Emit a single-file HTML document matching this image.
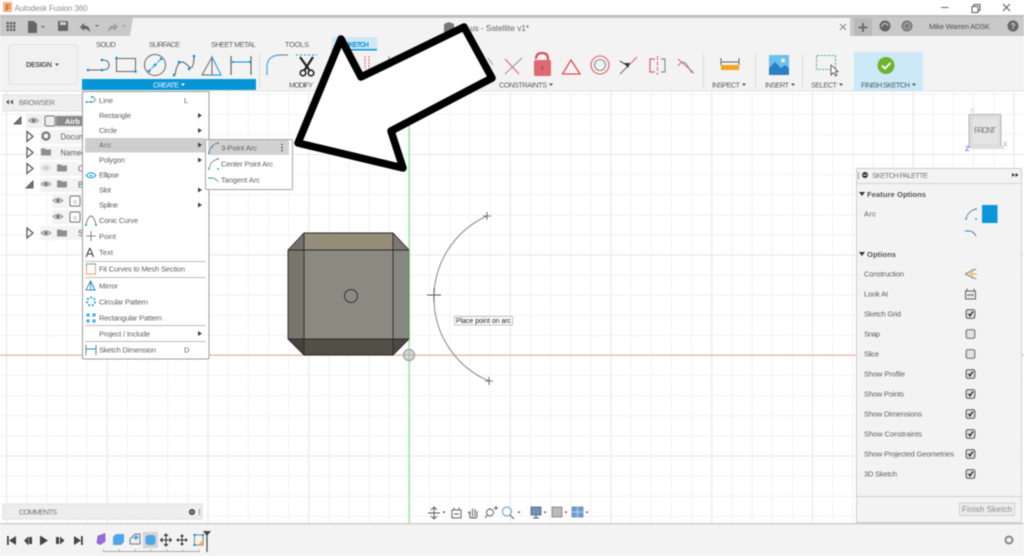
<!DOCTYPE html>
<html><head><meta charset="utf-8"><title>Autodesk Fusion 360</title>
<style>
html,body{margin:0;padding:0;background:#fff;width:1024px;height:556px;overflow:hidden}
svg{display:block;position:absolute;left:0;top:0;filter:blur(.4px)}
text{font-family:"Liberation Sans",sans-serif;font-size:7.4px;fill:#5c5c5c}
.t{font-size:7.4px;fill:#5f5f5f}
.m{font-size:7.5px;fill:#5f5f5f}
.b{font-weight:bold;fill:#555;font-size:7.6px}
.r{font-size:7.8px;fill:#5a5a5a}
</style></head><body>
<svg width="1024" height="556" viewBox="0 0 1024 556" xmlns="http://www.w3.org/2000/svg">
<defs>
<pattern id="g" x="409" y="355" width="20.15" height="20.1" patternUnits="userSpaceOnUse"><path d="M.5 0V20.1M0 .5H20.15" stroke="#f2f2f2" fill="none"/></pattern>
<pattern id="G" x="409" y="355" width="100.75" height="100.5" patternUnits="userSpaceOnUse"><path d="M.5 0V100.5M0 .5H100.75" stroke="#e7e7e7" fill="none"/></pattern>
<g id="eye"><path d="M-5 0Q0-4.5 5 0Q0 4.5-5 0Z" fill="#c9c9c9" stroke="#8a8a8a" stroke-width=".8"/><circle r="1.6" fill="#777"/></g>
<g id="fold"><path d="M-5-3.500H-1L0-2.500H5V3.500H-5Z" fill="#8f8f8f"/></g>
<path id="tri" d="M-3-5L3 0L-3 5Z" fill="#fff" stroke="#555" stroke-width="1.200"/>
<g id="chk"><rect x="-4.300" y="-4.300" width="8.600" height="8.600" rx="1.500" fill="#dedede" stroke="#666" stroke-width="1.200"/><path d="M-2-.3L-.6 1.800L2.400-2.500" fill="none" stroke="#222" stroke-width="1.300"/></g>
<rect id="unc" x="-4.300" y="-4.300" width="8.600" height="8.600" rx="1.500" fill="#e2e2e2" stroke="#777" stroke-width="1.200"/>
<path id="cr" d="M-4 0H4M0-4V4" stroke="#555" stroke-width=".8" fill="none"/>
</defs>

<!-- canvas -->
<rect width="1024" height="556" fill="#fff"/>
<rect y="91" width="1024" height="432" fill="url(#g)"/>
<rect y="91" width="1024" height="432" fill="url(#G)"/>
<rect x="0" y="354.600" width="1024" height="1" fill="#eda899"/>
<rect x="408.200" y="91" width="1.800" height="432" fill="#a6e8a6"/>

<!-- title bar -->
<rect x="3" y="2" width="9" height="10" fill="#f4b183"/>
<text x="5.500" y="10.500" style="font-size:8px;font-weight:bold;fill:#c55a11">F</text>
<text x="14.500" y="11" style="font-size:8px;fill:#8c8c8c" textLength="73">Autodesk Fusion 360</text>
<path d="M941 7.500H948.500" stroke="#666"/>
<path d="M972 6.500h6v6h-6zM974 6.500v-2h6v6h-2" fill="none" stroke="#555"/>
<path d="M1003 4L1010 11M1010 4L1003 11" stroke="#555"/>

<!-- tab row -->
<rect y="15" width="1024" height="21" fill="#c9c9c9"/>
<rect y="15" width="1024" height="2" fill="#bdbdbd"/>
<path d="M133 18H850V36H130Z" fill="#f3f3f3"/>
<rect x="850" y="18" width="174" height="18" fill="#c9c9c9"/>
<rect x="854" y="18" width="18" height="18" fill="#b9b9b9"/>
<path d="M863 23V32M858.500 27.500H867.500" stroke="#666" stroke-width="1.800"/>
<path d="M840 24L846 30M846 24L840 30" stroke="#888" stroke-width="1"/>
<circle cx="885" cy="26" r="5.500" fill="#666"/><path d="M882 27a3 3 0 0 1 6-1" stroke="#ccc" fill="none"/>
<circle cx="907" cy="26" r="5.500" fill="#7b7b7b"/><circle cx="907" cy="26" r="3" fill="none" stroke="#bbb" stroke-width=".8"/>
<text x="929" y="29" style="font-size:7.600px;fill:#555" textLength="61">Mike Warren ADSK</text>
<circle cx="1013" cy="26" r="5.500" fill="#666"/><text x="1010.600" y="29" style="font-size:8px;font-weight:bold;fill:#ddd">?</text>
<!-- quick access -->
<g fill="#666">
<path d="M6.500 22h2.400v2.400h-2.400zM9.800 22h2.400v2.400H9.800zM13 22h2.400v2.400H13zM6.500 25.300h2.400v2.400h-2.400zM9.800 25.300h2.400v2.400H9.800zM13 25.300h2.400v2.400H13zM6.500 28.600h2.400V31h-2.400zM9.800 28.600h2.400V31H9.800zM13 28.600h2.400V31H13z"/>
<path d="M28 21h6l3 3v9h-9z"/><path d="M41 26l2 2 2-2z"/>
<path d="M58 21h10v10H58z"/>
<path d="M80 27l4-4v2.500q6 0 6 7q-2-4-6-3.500v2z"/><path d="M95 25l2 2 2-2z"/></g>
<g fill="#a0a0a0"><path d="M118 27l-4-4v2.500q-6 0-6 7q2-4 6-3.500v2z"/><path d="M122 25l2 2 2-2z"/></g>
<rect x="60" y="22" width="6" height="3" fill="#ccc"/>

<!-- toolbar -->
<rect y="36" width="1024" height="55" fill="#f3f3f3"/>
<rect y="90.500" width="1024" height="1" fill="#e2e2e2"/>
<rect x="8.500" y="44.500" width="69" height="40" rx="3" fill="#f1f1f1" stroke="#e2e2e2"/>
<text x="26" y="67" style="font-size:7.200px;font-weight:bold;fill:#555" textLength="26">DESIGN</text><path d="M55 63.500h4l-2 2.500z" fill="#555"/>
<rect x="332" y="37" width="45" height="12" fill="#cfe8f6"/><rect x="332" y="49" width="45" height="1.500" fill="#0696d7"/>
<text class="t" x="96" y="47" textLength="20">SOLID</text>
<text class="t" x="149" y="47" textLength="31">SURFACE</text>
<text class="t" x="211" y="47" textLength="45">SHEET METAL</text>
<text class="t" x="285" y="47" textLength="24">TOOLS</text>
<text x="345" y="47" style="font-size:7.200px;font-weight:bold;fill:#0696d7" textLength="24">SKETCH</text>
<rect x="82" y="79" width="174" height="11" fill="#0696d7"/>
<text x="153" y="87.500" style="font-size:7.500px;fill:#e8f4fb" textLength="26">CREATE</text><path d="M181 83.500h4l-2 2.500z" fill="#fff"/>
<!-- create icons -->
<g fill="none" stroke="#666" stroke-width="1">
<path d="M88 70H102Q109 70 109 65Q109 60 102 60"/>
<rect x="116.500" y="58.500" width="19" height="13"/>
<circle cx="155" cy="65" r="10.500"/>
<path d="M175 75Q177 61 183 62Q187 64 190 68Q194 68 194 56" stroke-width="1.100"/>
<path d="M202 75L212 57L212 75Z"/>
<path d="M231 56V75M251 56V75" stroke-width="1.200"/>
<path d="M267 75V67Q267 56 279 55H288" stroke="#8a8a8a" stroke-width="1.200"/>
</g>
<path d="M212 57L221 75H212" fill="none" stroke="#3aa0dc" stroke-width="1.200"/>
<path d="M267 75V67Q267 56 279 55" fill="none" stroke="#64b5e8" stroke-width="1.300"/>
<path d="M233 62H250" stroke="#0696d7" stroke-width="1"/>
<path d="M149 71L161 59" stroke="#0696d7" stroke-width="1" stroke-dasharray="3 1"/>
<g fill="#0696d7">
<circle cx="88" cy="70" r="1.300"/><circle cx="102" cy="70" r="1.300"/><circle cx="102" cy="60" r="1.300"/>
<circle cx="116.500" cy="58" r="1.300"/><circle cx="135.500" cy="71.500" r="1.300"/>
<circle cx="149" cy="71" r="1.300"/><circle cx="155" cy="65" r="1.300"/><circle cx="161" cy="59" r="1.300"/>
<circle cx="174" cy="75" r="1.300"/><circle cx="179" cy="62" r="1.300"/><circle cx="189" cy="69" r="1.300"/><circle cx="194" cy="56" r="1.300"/>
<circle cx="233" cy="62" r="1.100"/><circle cx="250" cy="62" r="1.100"/>
</g>
<!-- scissors -->
<path d="M300 57L310 71M313 57L304 71" stroke="#222" stroke-width="2.200"/>
<circle cx="303" cy="73" r="2.800" fill="none" stroke="#222" stroke-width="1.600"/><circle cx="311" cy="73" r="2.800" fill="none" stroke="#222" stroke-width="1.600"/>
<path d="M296 55H317" stroke="#0696d7" stroke-dasharray="2 2"/>
<text class="t" x="289" y="87.500" textLength="24">MODIFY</text>
<path d="M259.500 54V88" stroke="#ddd"/>
<path d="M365 56V69M369 56V69" stroke="#e0606a" stroke-width="1" stroke-dasharray="2 1"/>
<path d="M389 56V69" stroke="#e0606a"/>

<!-- constraints -->
<path d="M505 59L519 74" stroke="#e06a72" stroke-width="1.200"/><path d="M505 74L522 58" stroke="#9a9a9a"/>
<path d="M488 58L493 65" stroke="#9a9a9a"/>
<path d="M536 59q0-6 6-6t6 6v3" fill="none" stroke="#d9505a" stroke-width="2.200"/>
<rect x="534" y="60" width="17" height="16" rx="1.500" fill="#dd6a72"/><rect x="541.800" y="66" width="1" height="4" fill="#a83c44"/>
<path d="M571 60L580 74H562.500Z" fill="none" stroke="#e0505a" stroke-width="1.300"/>
<circle cx="600" cy="65" r="9" fill="none" stroke="#e0606a" stroke-width="1.100"/><circle cx="600" cy="65" r="5.500" fill="none" stroke="#8d8d8d" stroke-width="1.100"/>
<path d="M620 74L637 57" stroke="#e0606a" stroke-width="1"/><path d="M620 74L627 67" stroke="#808080"/><path d="M620 61L628 66" stroke="#333"/><path d="M628 68L624 63L630 63Z" fill="#333"/>
<path d="M655 59H650V72H655" fill="none" stroke="#e0606a" stroke-width="1.200"/><path d="M661 59H665V72H661" fill="none" stroke="#8d8d8d" stroke-width="1.200"/><path d="M657.500 56V75" stroke="#e0606a" stroke-dasharray="4 1.500"/>
<path d="M678 59L694 73" stroke="#e0606a"/><path d="M678 66Q683 59 687 65L692 73" fill="none" stroke="#888"/>
<text class="t" x="499" y="87.500" textLength="48">CONSTRAINTS</text><path d="M549 83.500h4l-2 2.500z" fill="#555"/>
<path d="M703.500 54V88M755.500 54V88M802.500 54V88" stroke="#dcdcdc"/>

<!-- inspect -->
<rect x="721" y="65" width="18" height="5" fill="#f0a51e"/><path d="M721 62H739M721 58V65M739 58V65" stroke="#666"/>
<text class="t" x="712" y="87.500" textLength="28">INSPECT</text><path d="M742 83.500h4l-2 2.500z" fill="#555"/>
<!-- insert -->
<rect x="769" y="55" width="20" height="20" fill="#6cc0f0"/><path d="M769 75V68L775 62L781 68L785 65L789 68V75Z" fill="#2c7fc0"/><circle cx="783" cy="60.500" r="2" fill="#f4efc8"/>
<text class="t" x="765" y="87.500" textLength="24">INSERT</text><path d="M791 83.500h4l-2 2.500z" fill="#555"/>
<!-- select -->
<rect x="816.500" y="55.500" width="19" height="14" fill="none" stroke="#5fbf7f" stroke-width="1.100" stroke-dasharray="2.500 1.200"/>
<path d="M831 65L831 75L833.500 72.500L835.500 76L837 75L835.500 71.500L838 71.500Z" fill="#fff" stroke="#444" stroke-width=".8"/>
<text class="t" x="811" y="87.500" textLength="26">SELECT</text><path d="M839 83.500h4l-2 2.500z" fill="#555"/>
<!-- finish -->
<rect x="854" y="52" width="69" height="39" fill="#cde8f6"/>
<circle cx="886" cy="65.500" r="8.500" fill="#6cb52d"/><path d="M882 65.500L885 68.500L890.500 63" fill="none" stroke="#fff" stroke-width="1.900"/>
<text class="t" x="861" y="87.500" textLength="49" style="fill:#4f5f68">FINISH SKETCH</text><path d="M912 83.500h4l-2 2.500z" fill="#555"/>

<!-- title -->
<path d="M444 24l5-2 5 2v8l-5 2-5-2z" fill="#777"/>
<text x="470" y="31" style="font-size:8.200px;fill:#666" textLength="59">us - Satellite v1*</text>

<!-- browser -->
<rect x="3" y="95" width="79" height="16" fill="#efefef" stroke="#e4e4e4"/>
<path d="M6 102l3-2.500v5zM10 102l3-2.500v5z" fill="#555"/>
<text x="19" y="105" style="font-size:7.400px;fill:#777" textLength="36">BROWSER</text>
<rect x="27" y="114" width="55" height="14" fill="#f0f0f0"/>
<path d="M14 124L21 117V124Z" fill="#777" stroke="#444" stroke-width=".8"/>
<use href="#eye" x="33.500" y="120.500"/>
<rect x="45" y="116" width="10" height="10" rx="1.500" fill="#eee" stroke="#777"/>
<rect x="56" y="116" width="26" height="10" fill="#8a8a8a"/><text x="65" y="124" style="font-size:7.500px;font-weight:bold;fill:#fff">Airb</text>
<rect x="40" y="130" width="42" height="14" fill="#f3f3f3"/><rect x="40" y="146" width="42" height="14" fill="#f3f3f3"/><rect x="40" y="162" width="42" height="14" fill="#f3f3f3"/><rect x="40" y="178" width="42" height="14" fill="#f3f3f3"/><rect x="52" y="194" width="30" height="14" fill="#f3f3f3"/><rect x="52" y="210" width="30" height="14" fill="#f3f3f3"/><rect x="40" y="226" width="42" height="14" fill="#f3f3f3"/>
<use href="#tri" x="30" y="136.500"/>
<circle cx="46" cy="136" r="3.500" fill="none" stroke="#777" stroke-width="2.200"/>
<text class="r" x="60.500" y="139.500">Docum</text>
<use href="#tri" x="30" y="152.500"/>
<use href="#fold" x="46" y="152"/>
<text class="r" x="60.500" y="155.500">Named</text>
<use href="#tri" x="30" y="168.500"/>
<use href="#eye" x="46" y="168" opacity=".35"/><use href="#fold" x="62" y="168"/>
<text class="r" x="78" y="171.500">O</text>
<path d="M26 188L33 181V188Z" fill="#777" stroke="#444" stroke-width=".8"/>
<use href="#eye" x="46" y="184"/><use href="#fold" x="62" y="184"/>
<text class="r" x="78" y="187.500">B</text>
<use href="#eye" x="58" y="200.500"/><rect x="70" y="196" width="10" height="10" rx="1.500" fill="#fff" stroke="#777"/><rect x="73" y="200" width="4" height="4" fill="#ddd"/>
<use href="#eye" x="58" y="216.500"/><rect x="70" y="212" width="10" height="10" rx="1.500" fill="#fff" stroke="#777"/><rect x="73" y="216" width="4" height="4" fill="#ddd"/>
<use href="#tri" x="30" y="233"/>
<use href="#eye" x="46" y="233"/><use href="#fold" x="62" y="233"/>
<text class="r" x="78" y="236">S</text>

<!-- comments -->
<rect x="3" y="504" width="199" height="15" fill="#ededed" stroke="#e0e0e0"/>
<text x="19" y="514.500" style="font-size:7.400px;fill:#777" textLength="38">COMMENTS</text>
<circle cx="192" cy="512" r="3" fill="#444"/><circle cx="192" cy="512" r="1" fill="#ddd"/>
<path d="M199.500 509V515" stroke="#999"/>

<!-- model -->
<path d="M304 233H393V250H304Z" fill="#958d79"/>
<path d="M304 250H393V339H304Z" fill="#8b8a80"/>
<path d="M288 250H304V339H288Z" fill="#77766c"/>
<path d="M393 250H409V339H393Z" fill="#858780"/>
<path d="M304 339H393V355H304Z" fill="#534f46"/>
<path d="M288 250L304 233V250Z" fill="#74716a"/><path d="M393 233L409 250H393Z" fill="#7d7970"/>
<path d="M288 339H304V355Z" fill="#45423b"/><path d="M393 339H409L393 355Z" fill="#4d4a43"/>
<path d="M304 233H393L409 250V339L393 355H304L288 339V250ZM288 250H409M288 339H409M304 233V355M393 233V355" fill="none" stroke="#2b2b2b" stroke-width=".9"/>
<path d="M409 250V339" stroke="#4f9c5e" stroke-width="1"/>
<circle cx="351" cy="296" r="6.500" fill="none" stroke="#333"/>

<!-- sketch arc -->
<path d="M487 216A90 90 0 0 0 489 381" fill="none" stroke="#888" stroke-width="1"/>
<use href="#cr" x="487" y="216"/><use href="#cr" x="489" y="381"/>
<path d="M427 295H441M434 288V302" stroke="#555" stroke-width=".9"/>
<rect x="454.500" y="316.500" width="58" height="8.500" fill="#fff" stroke="#aaa" stroke-width=".7"/>
<text x="456" y="323" style="font-size:7px;fill:#222" textLength="55">Place point on arc</text>
<circle cx="409" cy="355" r="5.500" fill="#d8d8d8" stroke="#a8a8a8" stroke-width="1.500"/><path d="M409 350V360M404 355H414" stroke="#a8a8a8" stroke-width=".8"/>

<!-- menu -->
<rect x="82.500" y="91.500" width="126.500" height="267.500" rx="1" fill="#fff" stroke="#9e9e9e"/>
<rect x="85" y="138" width="120" height="14.500" fill="#cecece"/>
<text class="m" x="99" y="103" textLength="14">Line</text><text class="m" x="184" y="103">L</text>
<text class="m" x="99" y="118" textLength="32">Rectangle</text>
<text class="m" x="99" y="133" textLength="18">Circle</text>
<text class="m" x="99" y="147.500" textLength="12">Arc</text>
<text class="m" x="99" y="162.500" textLength="26">Polygon</text>
<text class="m" x="99" y="177.500" textLength="20">Ellipse</text>
<text class="m" x="99" y="192.500" textLength="12">Slot</text>
<text class="m" x="99" y="207.500" textLength="19">Spline</text>
<text class="m" x="99" y="223" textLength="39">Conic Curve</text>
<text class="m" x="99" y="239" textLength="17">Point</text>
<text class="m" x="99" y="255" textLength="14">Text</text>
<text class="m" x="99" y="271.500" textLength="86">Fit Curves to Mesh Section</text>
<text class="m" x="99" y="288.500" textLength="19">Mirror</text>
<text class="m" x="99" y="304.500" textLength="49">Circular Pattern</text>
<text class="m" x="99" y="320.500" textLength="63">Rectangular Pattern</text>
<text class="m" x="99" y="336.500" textLength="51">Project / Include</text>
<text class="m" x="99" y="352.500" textLength="57">Sketch Dimension</text><text class="m" x="184" y="352.500">D</text>
<g fill="#444">
<path d="M198 113l4 2.500-4 2.500zM198 128l4 2.500-4 2.500zM198 142.500l4 2.500-4 2.500zM198 157.500l4 2.500-4 2.500zM198 187.500l4 2.500-4 2.500zM198 202.500l4 2.500-4 2.500zM198 331l4 2.500-4 2.500z"/>
</g>
<path d="M85 261.500H206M85 277.500H206M85 325.500H206M85 341.500H206" stroke="#bdbdbd" stroke-width="1"/>
<!-- menu icons -->
<path d="M87 102H92Q96 102 95 99Q94 97 92 97" fill="none" stroke="#777" stroke-width=".8"/>
<g fill="#0696d7"><circle cx="86.500" cy="102" r="1"/><circle cx="91" cy="102" r="1"/><circle cx="92" cy="97" r="1"/></g>
<path d="M86 175.500Q91 170 96 175.500Q91 180 86 175.500Z" fill="none" stroke="#0696d7" stroke-width=".9"/><circle cx="91" cy="175.500" r="1" fill="#0696d7"/>
<path d="M86 224Q91 208 96 224" fill="none" stroke="#777" stroke-width=".9"/><circle cx="86" cy="225" r="1" fill="#0696d7"/><circle cx="96" cy="225" r="1" fill="#0696d7"/>
<path d="M86 236H96M91 231V241" stroke="#666" stroke-width=".8"/>
<text x="85.500" y="257" style="font-size:13px;fill:#444">A</text>
<rect x="86.500" y="264" width="9" height="10" fill="none" stroke="#e8925a" stroke-width=".9"/><path d="M86 264H96" stroke="#0696d7" stroke-dasharray="1.500 1.500"/>
<path d="M90.500 281L86 290H95Z" fill="none" stroke="#777" stroke-width=".9"/><path d="M90.500 281L95 290H90.500Z" fill="none" stroke="#0696d7" stroke-width=".9"/>
<circle cx="91" cy="301.500" r="4" fill="none" stroke="#0696d7" stroke-width="1.800" stroke-dasharray="1.800 1.800"/>
<path d="M87 314h2v2h-2zM93 314h2v2h-2zM87 320h2v2h-2zM93 320h2v2h-2z" fill="none" stroke="#0696d7" stroke-width=".9"/>
<path d="M86 345V355M96 345V355" stroke="#777" stroke-width="1"/><path d="M86 349H96" stroke="#0696d7"/>

<!-- submenu -->
<rect x="205.500" y="139.500" width="87" height="50" rx="1" fill="#fff" stroke="#a6a6a6"/>
<rect x="208" y="140" width="81" height="15" fill="#d2d2d2"/>
<text class="m" x="221" y="150.500" textLength="36">3-Point Arc</text>
<text class="m" x="221" y="166.500" textLength="52">Center Point Arc</text>
<text class="m" x="221" y="182.500" textLength="39">Tangent Arc</text>
<circle cx="282" cy="144.500" r=".8" fill="#333"/><circle cx="282" cy="147.500" r=".8" fill="#333"/><circle cx="282" cy="150.500" r=".8" fill="#333"/>
<path d="M209 153Q210 145 218 143" fill="none" stroke="#777" stroke-width=".8"/><g fill="#0696d7"><circle cx="209" cy="153" r=".9"/><circle cx="212" cy="147" r=".9"/><circle cx="218" cy="143" r=".9"/></g>
<path d="M209 169Q210 161 218 159" fill="none" stroke="#777" stroke-width=".8"/><g fill="#0696d7"><circle cx="209" cy="169" r=".9"/><circle cx="218" cy="169" r=".9"/><circle cx="218" cy="159" r=".9"/></g>
<path d="M208 178H212" stroke="#0696d7"/><path d="M212 178Q216 178 218 182" fill="none" stroke="#777" stroke-width=".8"/>

<!-- arrow -->
<path d="M341 39L298 143L403 168L391 131L492 78L464 27L361 77Z" fill="#fff" stroke="#000" stroke-width="7.500" stroke-linejoin="round"/>

<!-- view cube -->
<rect x="969" y="114.500" width="32" height="33" rx="1" fill="#dcdcdc" stroke="#b5b5b5"/>
<rect x="973" y="118" width="25" height="26" fill="#e4e4e4"/>
<path d="M971 149H1006L1002 146H971Z" fill="#dedede"/>
<text x="974" y="133" style="font-size:8.500px;font-weight:bold;fill:#9c9c9c" textLength="22">FRONT</text>
<text x="970" y="113" style="font-size:7px;fill:#8fdc8f">Y</text>
<text x="1002.500" y="146.500" style="font-size:7.500px;fill:#f08a8a">X</text>
<text x="965" y="151" style="font-size:7.500px;font-weight:bold;fill:#7a8ae8">Z</text>

<!-- sketch palette -->
<rect x="856.500" y="168.500" width="165" height="354" fill="#f3f3f3" stroke="#cfcfcf"/>
<path d="M857 183.500H1021" stroke="#d4d4d4"/>
<path d="M858.500 172V179" stroke="#999"/>
<circle cx="865" cy="175" r="3" fill="#333"/><rect x="863" y="174.500" width="4" height="1" fill="#ddd"/>
<text x="872" y="178" style="font-size:7.400px;fill:#777" textLength="56">SKETCH PALETTE</text>
<path d="M1012 173l3 2-3 2zM1015.500 173l3 2-3 2z" fill="#333"/>
<path d="M859 192h6l-3 4z" fill="#333"/>
<text class="b" x="867" y="197" textLength="59">Feature Options</text>
<text class="m" x="864" y="216.500" textLength="12">Arc</text>
<path d="M966 219Q968 211 976 209" fill="none" stroke="#888"/><circle cx="966" cy="219" r=".9" fill="#0696d7"/><circle cx="976" cy="209" r=".9" fill="#0696d7"/><circle cx="976" cy="219" r=".9" fill="#0696d7"/>
<rect x="982" y="205" width="15.500" height="18" fill="#0a96d8"/>
<path d="M965 231H970" stroke="#0696d7"/><path d="M970 231Q974 232 976 236" fill="none" stroke="#777"/>
<path d="M859 252h6l-3 4z" fill="#333"/>
<text class="b" x="867" y="257" textLength="29">Options</text>
<text class="m" x="864" y="276.500" textLength="40">Construction</text>
<text class="m" x="864" y="296.500" textLength="24">Look At</text>
<text class="m" x="864" y="316.500" textLength="37">Sketch Grid</text>
<text class="m" x="864" y="336.500" textLength="16">Snap</text>
<text class="m" x="864" y="356.500" textLength="15">Slice</text>
<text class="m" x="864" y="376.500" textLength="41">Show Profile</text>
<text class="m" x="864" y="396.500" textLength="40">Show Points</text>
<text class="m" x="864" y="416.500" textLength="58">Show Dimensions</text>
<text class="m" x="864" y="436.500" textLength="58">Show Constraints</text>
<text class="m" x="864" y="456.500" textLength="90">Show Projected Geometries</text>
<text class="m" x="864" y="476.500" textLength="33">3D Sketch</text>
<path d="M965 274L976 269M965 274L976 279" stroke="#888" fill="none"/><path d="M972 269V279" stroke="#f0a030" stroke-dasharray="2 1"/><path d="M969 274H977" stroke="#f0a030"/>
<rect x="965.500" y="291" width="10" height="8" fill="#e8e8e8" stroke="#666"/><path d="M967 291V288.500M974 291V288.500M967 295H974" stroke="#666"/>
<use href="#chk" x="970.500" y="314"/>
<use href="#unc" x="970.500" y="334"/>
<use href="#unc" x="970.500" y="354"/>
<use href="#chk" x="970.500" y="374"/>
<use href="#chk" x="970.500" y="394"/>
<use href="#chk" x="970.500" y="414"/>
<use href="#chk" x="970.500" y="434"/>
<use href="#chk" x="970.500" y="454"/>
<use href="#chk" x="970.500" y="474"/>
<path d="M857 496.500H1021" stroke="#cfcfcf"/>
<rect x="959.500" y="503" width="55" height="12.500" fill="#ececec" stroke="#cfcfcf"/>
<text x="962" y="512" style="font-size:8px;fill:#8a8a8a" textLength="50">Finish Sketch</text>

<!-- nav bar -->
<g stroke="#555" fill="none" stroke-width=".9">
<path d="M434 507V519M428 513H440M431 510L434 507L437 510M431 516L434 519L437 516"/>
<rect x="452" y="510" width="9" height="8"/><path d="M454 510V507.500M459 510V507.500M454 514H459"/>
<path d="M470 518V511M472.500 517V508.500M475 517V509M477 517V511M470 514L468 512M470 518H477"/>
<circle cx="490" cy="512.500" r="3.500"/><path d="M487.500 515L485 518M494 508H498M496 506V510"/>
<circle cx="507" cy="511.500" r="4.500" stroke="#4a90c0"/><path d="M510 515L514 519"/>
</g>
<path d="M442.500 511.500h3l-1.500 2zM517.500 511.500h3l-1.500 2zM543.500 511.500h3l-1.500 2zM564.500 511.500h3l-1.500 2zM585.500 511.500h3l-1.500 2z" fill="#555"/>
<rect x="531" y="507" width="10" height="8" fill="#6c93bd" stroke="#555" stroke-width=".7"/><path d="M536 515V518M533 518H539" stroke="#555"/>
<rect x="552" y="507" width="10" height="10" fill="#a8a8a8" stroke="#777" stroke-width=".7"/><path d="M554.500 507V517M557 507V517M559.500 507V517M552 509.500H562M552 512H562M552 514.500H562" stroke="#ddd" stroke-width=".5"/>
<rect x="572" y="507" width="11" height="10" fill="#6c9ed0" stroke="#5a7fa8" stroke-width=".7"/><path d="M577.500 507V517M572 512H583" stroke="#dde" stroke-width=".8"/>

<!-- bottom bar -->
<rect y="523" width="1024" height="33" fill="#f3f3f3"/>
<rect y="523" width="1024" height="1.500" fill="#cfcfcf"/>
<g fill="#444">
<path d="M7 536h1.800v9H7zM16 536v9l-7-4.500z"/>
<path d="M24 540.500l4.500-4v9zM29 537h3v7h-3z"/>
<path d="M40 535.500l8 5-8 5z"/>
<path d="M56 537h3v7h-3zM60 536.500l4.500 4-4.500 4z"/>
<path d="M74 536v9l7-4.500zM81 536h1.800v9H81z"/>
</g>
<path d="M98 536l7-2.500v8l-5 3-3-1.500z" fill="#9a6cd8" stroke="#7a4cb8" stroke-width=".6"/>
<path d="M113 537l3-3h8v8l-3 3h-8z" fill="#4ea7e8"/>
<path d="M130 539l5-5h5v10h-10z" fill="#eee" stroke="#777"/><path d="M133 538l3-3 3 2-3 3z" fill="#4ea7e8"/>
<rect x="143" y="532" width="15" height="16" fill="#d4d4d4"/>
<rect x="145.500" y="535" width="10" height="10" rx="3" fill="#4ea7e8"/>
<path d="M166 534V546M160.500 540H171.500M164 536L166 534L168 536M164 544L166 546L168 544M162.500 538L160.500 540L162.500 542M169.500 538L171.500 540L169.500 542" stroke="#333" fill="none"/>
<path d="M182 535V545M177 540H187M180.500 536.500L182 535L183.500 536.500M180.500 543.500L182 545L183.500 543.500M178.500 538.500L177 540L178.500 541.500M185.500 538.500L187 540L185.500 541.500" stroke="#333" fill="none"/>
<path d="M194.500 535H203V545H194.500Z" fill="none" stroke="#888"/><circle cx="194.500" cy="535" r="1.200" fill="#0696d7"/><circle cx="203" cy="535" r="1.200" fill="#0696d7"/><circle cx="194.500" cy="545" r="1.200" fill="#0696d7"/><path d="M199 545L203 541" stroke="#f0a030" stroke-width="1.500"/>
<path d="M103.500 549.500V551.500H199V549.500M119 549.500V551.500M135 549.500V551.500M151 549.500V551.500M167 549.500V551.500M183 549.500V551.500" stroke="#aaa" fill="none"/>
<path d="M203 531H211L207 536Z" fill="#444"/><path d="M207 535V552" stroke="#444" stroke-width="1.200"/>
<circle cx="1009" cy="540" r="3.500" fill="none" stroke="#888" stroke-width="2"/>
</svg>
</body></html>
